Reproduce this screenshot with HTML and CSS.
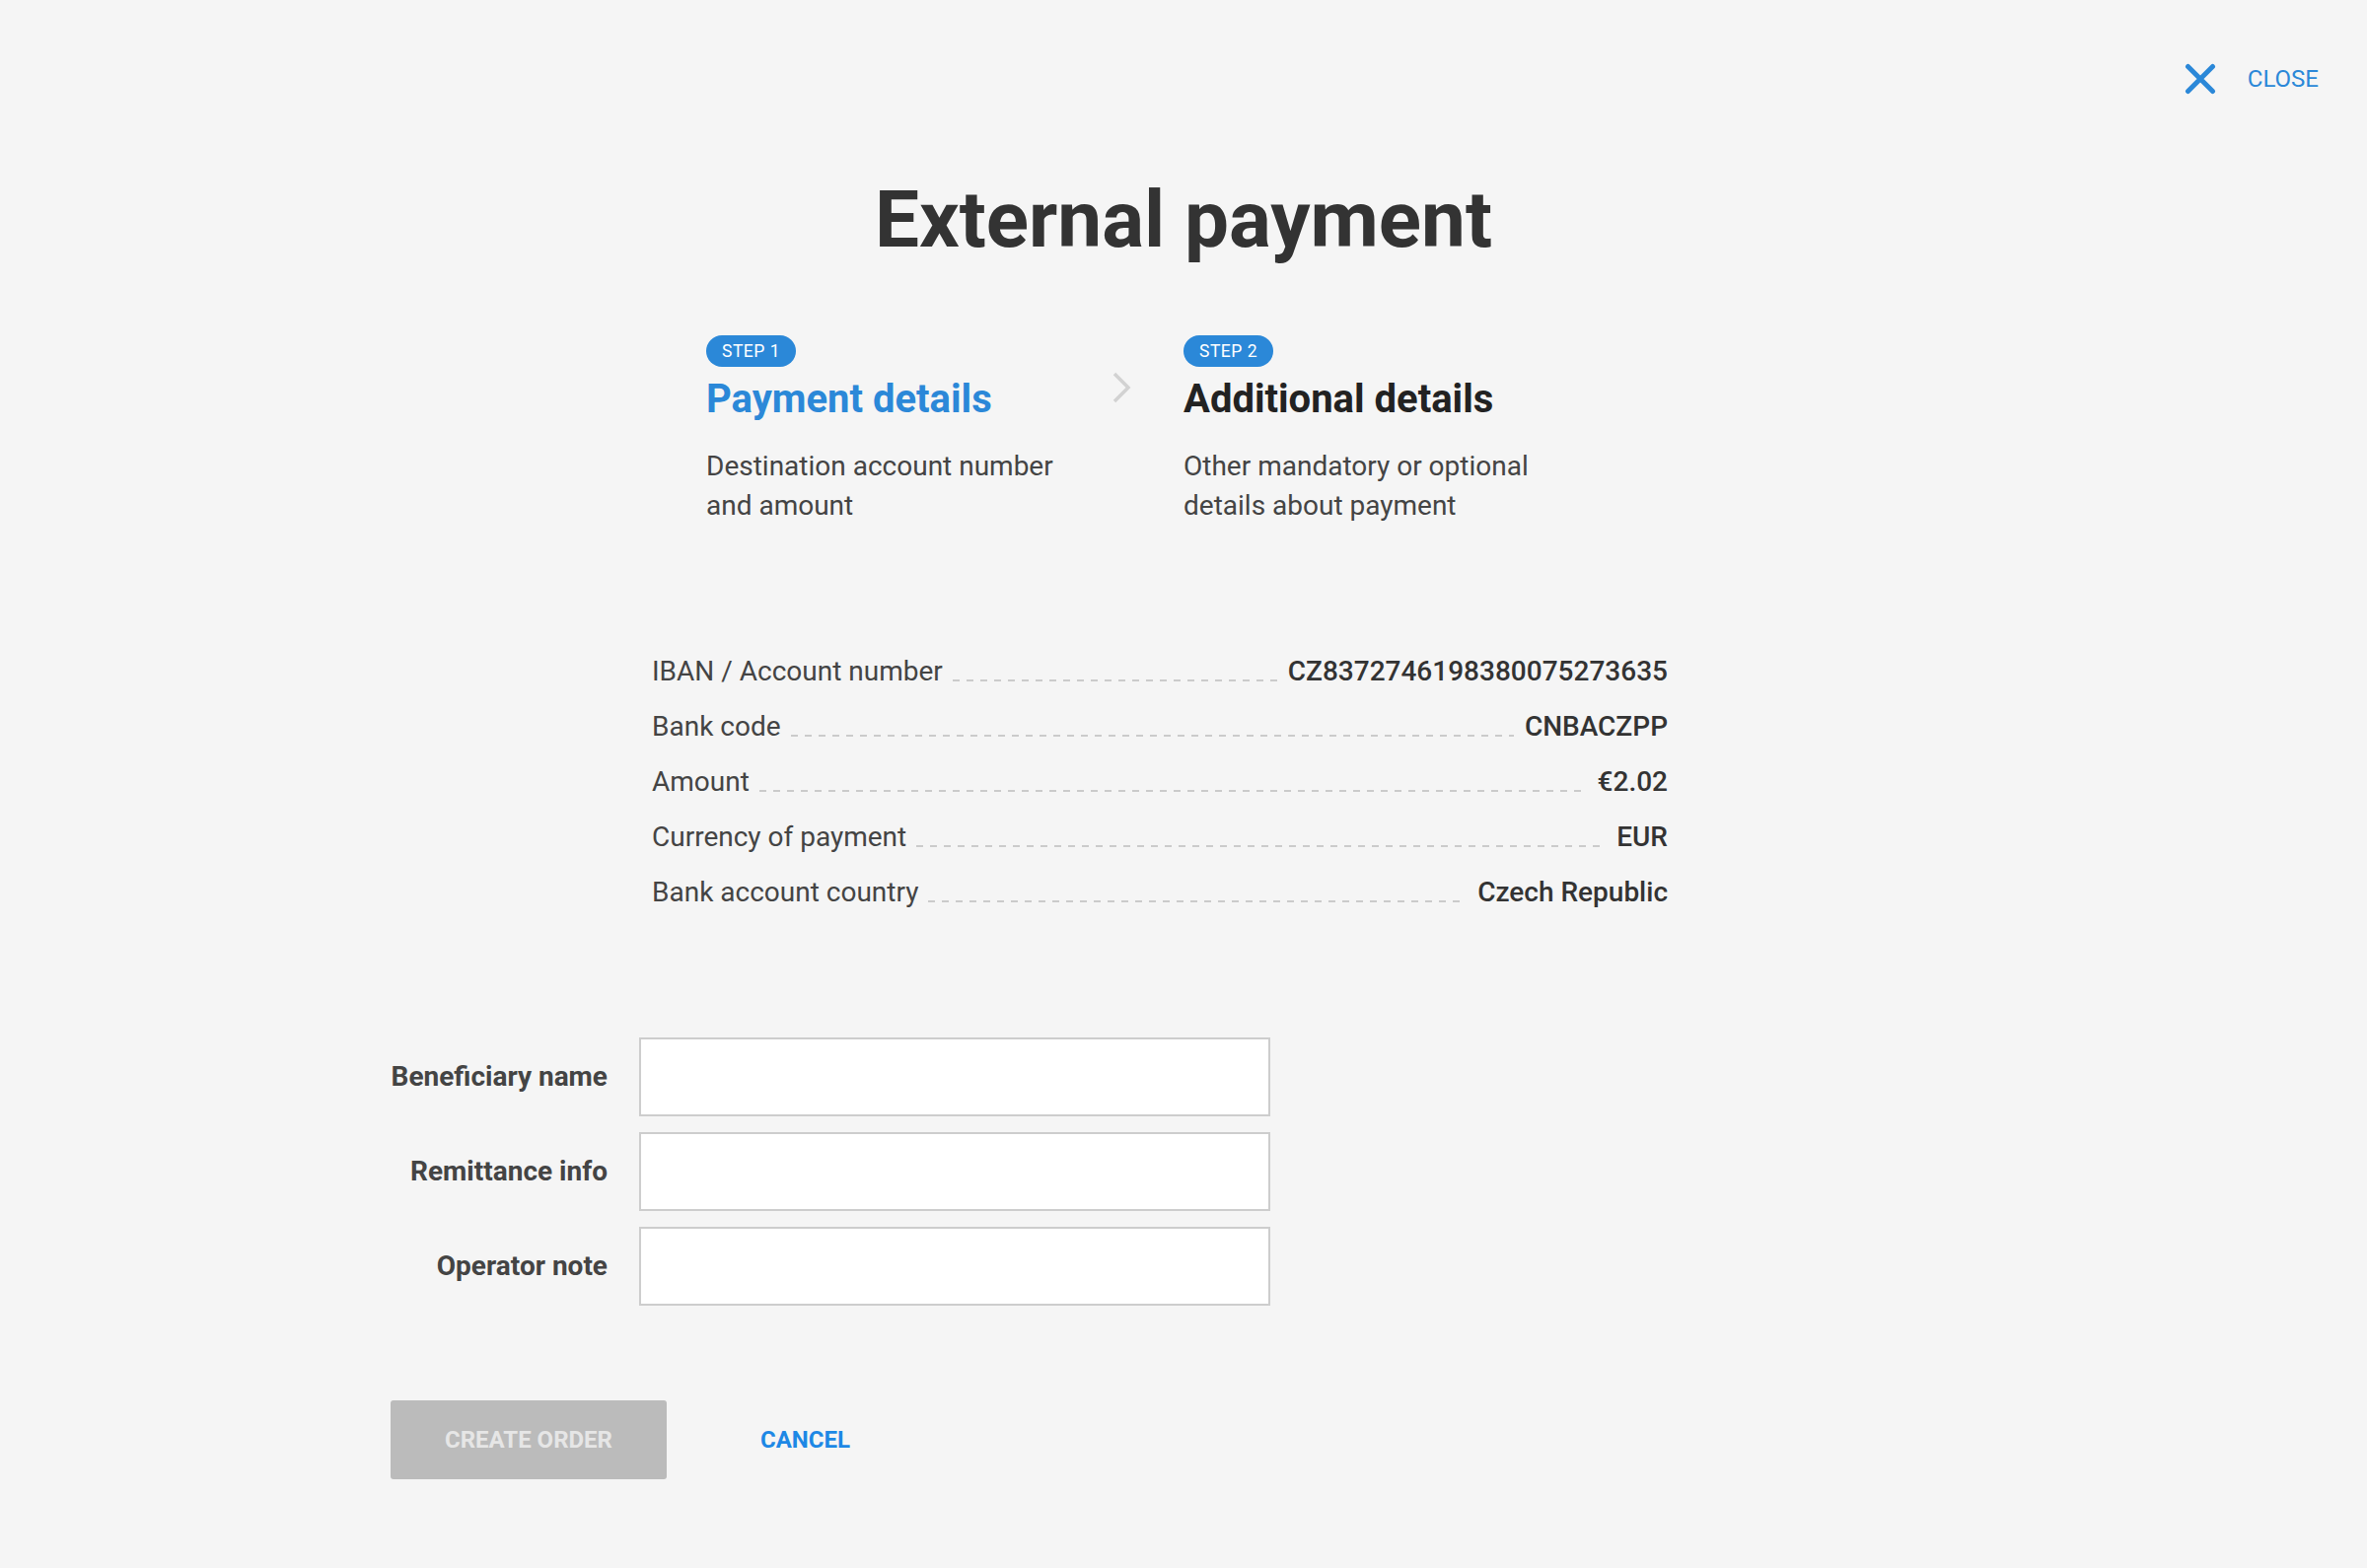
FILE: index.html
```html
<!DOCTYPE html>
<html lang="en">
<head>
<meta charset="utf-8">
<title>External payment</title>
<link rel="stylesheet" href="styles.css">
</head>
<body>
<div class="page">
  <header class="topbar">
    <button class="close-btn" type="button">
      <svg class="close-icon" width="32" height="32" viewBox="0 0 32 32" aria-hidden="true">
        <path d="M3.5 3.5 L28.5 28.5 M28.5 3.5 L3.5 28.5" stroke="#2b88d8" stroke-width="5" stroke-linecap="round" fill="none"/>
      </svg>
      <span class="close-text">CLOSE</span>
    </button>
  </header>

  <h1 class="title">External payment</h1>

  <div class="steps">
    <div class="step">
      <span class="badge">STEP 1</span>
      <div class="step-title active">Payment details</div>
      <div class="step-desc">Destination account number<br>and amount</div>
    </div>
    <div class="step-arrow">
      <svg width="20" height="32" viewBox="0 0 20 32" aria-hidden="true">
        <path d="M2 2 L16 16 L2 30" stroke="#d2d2d2" stroke-width="3.5" fill="none"/>
      </svg>
    </div>
    <div class="step">
      <span class="badge">STEP 2</span>
      <div class="step-title">Additional details</div>
      <div class="step-desc">Other mandatory or optional<br>details about payment</div>
    </div>
  </div>

  <div class="content">
    <div class="details">
      <div class="detail-row"><span class="d-label">IBAN / Account number</span><span class="d-fill"></span><span class="d-value">CZ8372746198380075273635</span></div>
      <div class="detail-row"><span class="d-label">Bank code</span><span class="d-fill"></span><span class="d-value">CNBACZPP</span></div>
      <div class="detail-row"><span class="d-label">Amount</span><span class="d-fill"></span><span class="d-value">€2.02</span></div>
      <div class="detail-row"><span class="d-label">Currency of payment</span><span class="d-fill"></span><span class="d-value">EUR</span></div>
      <div class="detail-row"><span class="d-label">Bank account country</span><span class="d-fill"></span><span class="d-value">Czech Republic</span></div>
    </div>

    <form class="form">
      <label class="f-label" for="ben">Beneficiary name</label>
      <input class="f-input" id="ben" type="text">
      <label class="f-label" for="rem">Remittance info</label>
      <input class="f-input" id="rem" type="text">
      <label class="f-label" for="op">Operator note</label>
      <input class="f-input" id="op" type="text">
    </form>

    <div class="actions">
      <button class="btn-primary" type="button" disabled>CREATE ORDER</button>
      <button class="btn-text" type="button">CANCEL</button>
    </div>
  </div>
</div>
</body>
</html>
```

FILE: styles.css
```css
* { box-sizing: border-box; }

html, body {
  margin: 0;
  padding: 0;
  background: #f5f5f5;
}

body {
  font-family: Roboto, "Liberation Sans", Arial, sans-serif;
  color: #444;
}

.page {
  width: 2400px;
  min-height: 1590px;
}

.topbar {
  height: 160px;
  display: flex;
  justify-content: flex-end;
  align-items: center;
  padding-right: 49px;
}

.close-btn {
  display: flex;
  align-items: center;
  gap: 32px;
  border: 0;
  background: transparent;
  padding: 0;
  font-family: inherit;
  cursor: pointer;
}

.close-icon { display: block; }

.close-text {
  font-size: 24px;
  line-height: 32px;
  color: #2b88d8;
}

.title {
  margin: 15px 0 0;
  text-align: center;
  font-size: 80px;
  line-height: 96px;
  font-weight: 700;
  color: #333;
}

.steps {
  width: 968px;
  margin: 69px auto 0;
  display: grid;
  grid-template-columns: 412px 72px 484px;
}

.step {
  display: flex;
  flex-direction: column;
  align-items: flex-start;
}

.badge {
  display: inline-flex;
  align-items: center;
  justify-content: center;
  height: 32px;
  padding: 0 16px;
  border-radius: 16px;
  background: #2b88d8;
  color: #fff;
  font-size: 17.5px;
  letter-spacing: 0.5px;
}

.step-title {
  margin-top: 9px;
  font-size: 40px;
  line-height: 48px;
  font-weight: 700;
  color: #222;
}

.step-title.active { color: #2b88d8; }

.step-desc {
  margin-top: 24px;
  font-size: 28px;
  line-height: 40px;
  color: #444;
}

.step-arrow {
  padding-top: 37px;
}

.step-arrow svg { display: block; }

.content {
  width: 1608px;
  margin: 0 auto;
}

.details {
  width: 1030px;
  margin: 128px 0 0 265px;
  display: flex;
  flex-direction: column;
  gap: 16px;
}

.detail-row {
  display: flex;
  font-size: 28px;
  line-height: 40px;
}

.d-label {
  color: #444;
  white-space: nowrap;
}

.d-fill {
  flex: 1;
  align-self: flex-end;
  height: 2px;
  margin: 0 11px 10px 10px;
  background-image: repeating-linear-gradient(to right, #cbcbcb 0 7px, transparent 7px 14px);
}

.d-value {
  font-weight: 500;
  color: #333;
  white-space: nowrap;
}

.form {
  margin-top: 127px;
  display: grid;
  grid-template-columns: 220px 640px;
  column-gap: 32px;
  row-gap: 16px;
  align-items: center;
}

.f-label {
  text-align: right;
  font-size: 28px;
  line-height: 40px;
  font-weight: 700;
  color: #444;
  white-space: nowrap;
}

.f-input {
  height: 80px;
  width: 640px;
  border: 2px solid #cdcdcd;
  border-radius: 0;
  background: #fff;
  font-family: inherit;
  font-size: 28px;
  padding: 0 20px;
  outline: none;
}

.actions {
  margin-top: 96px;
  display: flex;
  align-items: center;
}

.btn-primary {
  width: 280px;
  height: 80px;
  border: 0;
  border-radius: 3px;
  background: #bbbbbb;
  color: #e6e6e6;
  font-family: inherit;
  font-size: 24px;
  font-weight: 700;
  padding: 0;
}

.btn-text {
  margin-left: 55px;
  height: 80px;
  padding: 0 40px;
  border: 0;
  background: transparent;
  color: #1e88e5;
  font-family: inherit;
  font-size: 24px;
  font-weight: 700;
  cursor: pointer;
}
```
